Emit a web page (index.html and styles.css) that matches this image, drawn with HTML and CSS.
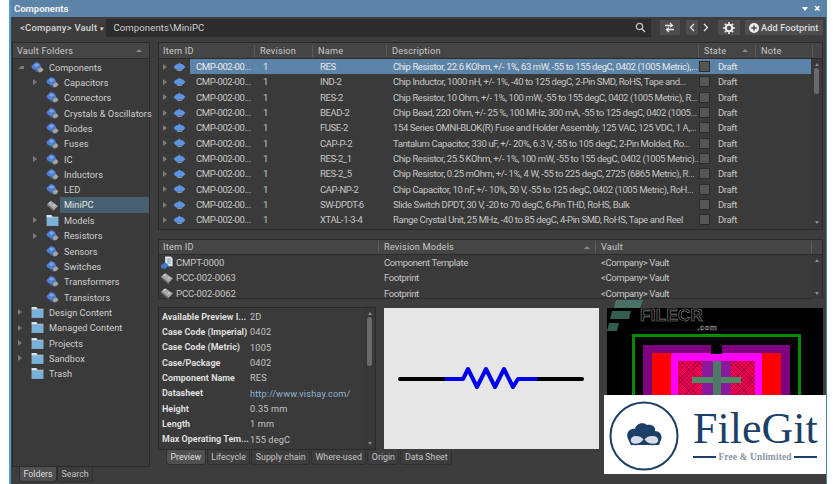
FILE: index.html
```html
<!DOCTYPE html>
<html lang="en">
<head>
<meta charset="utf-8">
<title>Components</title>
<link rel="stylesheet" href="styles.css">
</head>
<body>
<svg class="defs" width="0" height="0" aria-hidden="true">
  <symbol id="i-comp" viewBox="0 0 13 13">
    <path d="M0.500 5 3 2.500 5 1 8 2 9.500 4 10 6 6 9 3 8.500 1 7Z" fill="#4f80d2"/>
    <path d="M3 4 5.500 2.500 8 4 5.500 6Z" fill="#7ea8ea"/>
    <path d="M6 9 10 6 12.500 8.500 10.500 11 8 11.500Z" fill="#a4a4a4"/>
    <path d="M3 8.500 6 9 8 11.500 5 10.500Z" fill="#38639f"/>
  </symbol>
  <symbol id="i-row" viewBox="0 0 13 10">
    <path d="M0.500 5 3 2.500 5 2 6.500 0.500 8 2 10 2.500 12.500 5 10 7.500 3 7.500Z" fill="#5d93e0"/>
    <path d="M3.500 7.500H9.500L8.500 9H4.500Z" fill="#8198b8"/>
  </symbol>
  <symbol id="i-chip" viewBox="0 0 13 13">
    <path d="M1 5 5 2 12 7 8 11Z" fill="#a8a8a8"/>
    <path d="M1 5 8 11 8 12.500 1 6.500Z" fill="#707070"/>
    <path d="M3 3.500 4.500 2.500 5.500 3.200 4 4.300ZM7 6.500 8.500 5.500 9.500 6.200 8 7.300Z" fill="#dedede"/>
  </symbol>
  <symbol id="i-folder" viewBox="0 0 12 11">
    <path d="M0.500 0.500H5L6 2H11.500V3H0.500Z" fill="#d6e6f2"/>
    <path d="M0.500 3H11.500V10.500H0.500Z" fill="#79b2d9"/>
  </symbol>
  <symbol id="i-doc" viewBox="0 0 14 15">
    <path d="M5 0.500H11L13 2.500V11H5Z" fill="#dce3ea"/>
    <path d="M7 3.500H11M7 5.500H11M7 7.500H11" stroke="#7d93ad" fill="none"/>
    <path d="M0.500 10 5 7 9 10 5 14 1 13Z" fill="#3f78cc"/>
  </symbol>
</svg>

<div class="window">
  <header class="titlebar">
    <span class="title">Components</span>
    <span class="title-tools"><span class="menu-arrow"></span><span class="close">×</span></span>
  </header>

  <div class="toolbar">
    <span class="vault-label">&lt;Company&gt; Vault <span class="caret">▾</span></span>
    <div class="path">
      <span>Components\MiniPC</span>
      <svg class="search" width="11" height="11" viewBox="0 0 11 11"><circle cx="4.500" cy="4.500" r="3.200" fill="none" stroke="#bdbdbd" stroke-width="1.300"/><path d="M7 7 10 10" stroke="#bdbdbd" stroke-width="1.600"/></svg>
    </div>
    <button class="tool tool-refresh"><svg width="11" height="11" viewBox="0 0 11 11"><path d="M1 3.500H8M6 1 8.500 3.500 6 5M10 7.500H3M5 5.500 2.500 7.500 5 10" fill="none" stroke="#e6e6e6" stroke-width="1.300"/></svg></button>
    <div class="nav">
      <button class="tool tool-nav"><svg width="6" height="9" viewBox="0 0 6 9"><path d="M5 1 1.500 4.500 5 8" fill="none" stroke="#e6e6e6" stroke-width="1.300"/></svg></button>
      <button class="tool tool-nav tool-plain"><svg width="6" height="9" viewBox="0 0 6 9"><path d="M1 1 4.500 4.500 1 8" fill="none" stroke="#e6e6e6" stroke-width="1.300"/></svg></button>
    </div>
    <button class="tool tool-gear"><svg width="12" height="12" viewBox="0 0 12 12"><circle cx="6" cy="6" r="3.200" fill="none" stroke="#eee" stroke-width="2"/><path d="M6 0V2.500M6 9.500V12M0 6H2.500M9.500 6H12M1.800 1.800 3.500 3.500M8.500 8.500 10.200 10.200M1.800 10.200 3.500 8.500M8.500 3.500 10.200 1.800" stroke="#eee" stroke-width="1.500"/></svg></button>
    <button class="tool tool-add"><svg width="10" height="10" viewBox="0 0 10 10"><circle cx="5" cy="5" r="5" fill="#eee"/><path d="M5 2.200V7.800M2.200 5H7.800" stroke="#4a4a4a" stroke-width="1.500"/></svg>Add Footprint</button>
  </div>

  <div class="main">
    <aside class="left">
      <div class="panel tree-panel">
        <div class="head tree-head"><span>Vault Folders</span><span class="sort-up"></span></div>
        <ul class="tree">
          <li class="node l0"><i class="tw tw-open"></i><svg class="ic"><use href="#i-comp"/></svg><span>Components</span></li>
          <li class="node l1"><i class="tw"></i><svg class="ic"><use href="#i-comp"/></svg><span>Capacitors</span></li>
          <li class="node l1"><i class="tw none"></i><svg class="ic"><use href="#i-comp"/></svg><span>Connectors</span></li>
          <li class="node l1"><i class="tw none"></i><svg class="ic"><use href="#i-comp"/></svg><span>Crystals &amp; Oscillators</span></li>
          <li class="node l1"><i class="tw none"></i><svg class="ic"><use href="#i-comp"/></svg><span>Diodes</span></li>
          <li class="node l1"><i class="tw none"></i><svg class="ic"><use href="#i-comp"/></svg><span>Fuses</span></li>
          <li class="node l1"><i class="tw"></i><svg class="ic"><use href="#i-comp"/></svg><span>IC</span></li>
          <li class="node l1"><i class="tw none"></i><svg class="ic"><use href="#i-comp"/></svg><span>Inductors</span></li>
          <li class="node l1"><i class="tw none"></i><svg class="ic"><use href="#i-comp"/></svg><span>LED</span></li>
          <li class="node l1"><i class="tw none"></i><svg class="ic"><use href="#i-chip"/></svg><span class="sel-name">MiniPC</span></li>
          <li class="node l1"><i class="tw"></i><svg class="ic"><use href="#i-folder"/></svg><span>Models</span></li>
          <li class="node l1"><i class="tw"></i><svg class="ic"><use href="#i-comp"/></svg><span>Resistors</span></li>
          <li class="node l1"><i class="tw none"></i><svg class="ic"><use href="#i-comp"/></svg><span>Sensors</span></li>
          <li class="node l1"><i class="tw none"></i><svg class="ic"><use href="#i-comp"/></svg><span>Switches</span></li>
          <li class="node l1"><i class="tw none"></i><svg class="ic"><use href="#i-comp"/></svg><span>Transformers</span></li>
          <li class="node l1"><i class="tw none"></i><svg class="ic"><use href="#i-comp"/></svg><span>Transistors</span></li>
          <li class="node l0"><i class="tw"></i><svg class="ic"><use href="#i-folder"/></svg><span>Design Content</span></li>
          <li class="node l0"><i class="tw"></i><svg class="ic"><use href="#i-folder"/></svg><span>Managed Content</span></li>
          <li class="node l0"><i class="tw"></i><svg class="ic"><use href="#i-folder"/></svg><span>Projects</span></li>
          <li class="node l0"><i class="tw"></i><svg class="ic"><use href="#i-folder"/></svg><span>Sandbox</span></li>
          <li class="node l0"><i class="tw none"></i><svg class="ic"><use href="#i-folder"/></svg><span>Trash</span></li>
        </ul>
      </div>
      <div class="tabs left-tabs"><span class="tab on">Folders</span><span class="tab">Search</span></div>
    </aside>

    <section class="right">
      <div class="panel items">
        <div class="head items-grid">
          <span class="hc">Item ID</span><span class="hc sep">Revision</span><span class="hc sep">Name</span><span class="hc sep">Description</span><span class="hc sep state-h">State<span class="sort-up"></span></span><span class="hc sep">Note</span><span class="hc sep"></span>
        </div>
        <div class="items-body">
          <div class="rows">
            <div class="row items-grid selected"><span class="idc"><i class="tw"></i><svg class="ir"><use href="#i-row"/></svg><span class="idt">CMP-002-00...</span></span><span class="rev">1</span><span class="nm">RES</span><span class="desc">Chip Resistor, 22.6 KOhm, +/- 1%, 63 mW, -55 to 155 degC, 0402 (1005 Metric),...</span><span class="st"><i class="box"></i>Draft</span></div>
            <div class="row items-grid"><span class="idc"><i class="tw"></i><svg class="ir"><use href="#i-row"/></svg><span class="idt">CMP-002-00...</span></span><span class="rev">1</span><span class="nm">IND-2</span><span class="desc">Chip Inductor, 1000 nH, +/- 1%, -40 to 125 degC, 2-Pin SMD, RoHS, Tape and...</span><span class="st"><i class="box"></i>Draft</span></div>
            <div class="row items-grid"><span class="idc"><i class="tw"></i><svg class="ir"><use href="#i-row"/></svg><span class="idt">CMP-002-00...</span></span><span class="rev">1</span><span class="nm">RES-2</span><span class="desc">Chip Resistor, 10 Ohm, +/- 1%, 100 mW, -55 to 155 degC, 0402 (1005 Metric), R...</span><span class="st"><i class="box"></i>Draft</span></div>
            <div class="row items-grid"><span class="idc"><i class="tw"></i><svg class="ir"><use href="#i-row"/></svg><span class="idt">CMP-002-00...</span></span><span class="rev">1</span><span class="nm">BEAD-2</span><span class="desc">Chip Bead, 220 Ohm, +/- 25 %, 100 MHz, 300 mA, -55 to 125 degC, 0402 (1005...</span><span class="st"><i class="box"></i>Draft</span></div>
            <div class="row items-grid"><span class="idc"><i class="tw"></i><svg class="ir"><use href="#i-row"/></svg><span class="idt">CMP-002-00...</span></span><span class="rev">1</span><span class="nm">FUSE-2</span><span class="desc">154 Series OMNI-BLOK(R) Fuse and Holder Assembly, 125 VAC, 125 VDC, 1 A,...</span><span class="st"><i class="box"></i>Draft</span></div>
            <div class="row items-grid"><span class="idc"><i class="tw"></i><svg class="ir"><use href="#i-row"/></svg><span class="idt">CMP-002-00...</span></span><span class="rev">1</span><span class="nm">CAP-P-2</span><span class="desc">Tantalum Capacitor, 330 uF, +/- 20%, 6.3 V, -55 to 105 degC, 2-Pin Molded, Ro...</span><span class="st"><i class="box"></i>Draft</span></div>
            <div class="row items-grid"><span class="idc"><i class="tw"></i><svg class="ir"><use href="#i-row"/></svg><span class="idt">CMP-002-00...</span></span><span class="rev">1</span><span class="nm">RES-2_1</span><span class="desc">Chip Resistor, 25.5 KOhm, +/- 1%, 100 mW, -55 to 155 degC, 0402 (1005 Metric)...</span><span class="st"><i class="box"></i>Draft</span></div>
            <div class="row items-grid"><span class="idc"><i class="tw"></i><svg class="ir"><use href="#i-row"/></svg><span class="idt">CMP-002-00...</span></span><span class="rev">1</span><span class="nm">RES-2_5</span><span class="desc">Chip Resistor, 0.25 mOhm, +/- 1%, 4 W, -55 to 225 degC, 2725 (6865 Metric), R...</span><span class="st"><i class="box"></i>Draft</span></div>
            <div class="row items-grid"><span class="idc"><i class="tw"></i><svg class="ir"><use href="#i-row"/></svg><span class="idt">CMP-002-00...</span></span><span class="rev">1</span><span class="nm">CAP-NP-2</span><span class="desc">Chip Capacitor, 10 nF, +/- 10%, 50 V, -55 to 125 degC, 0402 (1005 Metric), RoH...</span><span class="st"><i class="box"></i>Draft</span></div>
            <div class="row items-grid"><span class="idc"><i class="tw"></i><svg class="ir"><use href="#i-row"/></svg><span class="idt">CMP-002-00...</span></span><span class="rev">1</span><span class="nm">SW-DPDT-6</span><span class="desc">Slide Switch DPDT, 30 V, -20 to 70 degC, 6-Pin THD, RoHS, Bulk</span><span class="st"><i class="box"></i>Draft</span></div>
            <div class="row items-grid"><span class="idc"><i class="tw"></i><svg class="ir"><use href="#i-row"/></svg><span class="idt">CMP-002-00...</span></span><span class="rev">1</span><span class="nm">XTAL-1-3-4</span><span class="desc">Range Crystal Unit, 25 MHz, -40 to 85 degC, 4-Pin SMD, RoHS, Tape and Reel</span><span class="st"><i class="box"></i>Draft</span></div>
          </div>
          <div class="scroll"><i class="sa up"></i><i class="thumb t-items"></i><i class="sa down"></i></div>
        </div>
      </div>

      <div class="panel models">
        <div class="head models-grid">
          <span class="hc">Item ID</span><span class="hc sep rm-h">Revision Models<span class="sort-up"></span></span><span class="hc sep">Vault</span><span class="hc sep"></span>
        </div>
        <div class="items-body">
          <div class="rows">
            <div class="row models-grid"><span class="mid"><svg class="im"><use href="#i-doc"/></svg>CMPT-0000</span><span class="ind">Component Template</span><span class="ind">&lt;Company&gt; Vault</span></div>
            <div class="row models-grid"><span class="mid"><svg class="im"><use href="#i-chip"/></svg>PCC-002-0063</span><span class="ind">Footprint</span><span class="ind">&lt;Company&gt; Vault</span></div>
            <div class="row models-grid"><span class="mid"><svg class="im"><use href="#i-chip"/></svg>PCC-002-0062</span><span class="ind">Footprint</span><span class="ind">&lt;Company&gt; Vault</span></div>
          </div>
          <div class="scroll"><i class="sa up"></i><i class="sa down"></i></div>
        </div>
      </div>

      <div class="details">
        <div class="panel props">
          <dl class="plist">
            <div class="prop"><dt>Available Preview I...</dt><dd>2D</dd></div>
            <div class="prop"><dt>Case Code (Imperial)</dt><dd>0402</dd></div>
            <div class="prop"><dt>Case Code (Metric)</dt><dd>1005</dd></div>
            <div class="prop"><dt>Case/Package</dt><dd>0402</dd></div>
            <div class="prop"><dt>Component Name</dt><dd>RES</dd></div>
            <div class="prop"><dt>Datasheet</dt><dd class="link">http://www.vishay.com/</dd></div>
            <div class="prop"><dt>Height</dt><dd>0.35 mm</dd></div>
            <div class="prop"><dt>Length</dt><dd>1 mm</dd></div>
            <div class="prop"><dt>Max Operating Tem...</dt><dd>155 degC</dd></div>
          </dl>
          <div class="scroll"><i class="sa up"></i><i class="thumb t-props"></i><i class="sa down"></i></div>
        </div>
        <div class="preview">
          <svg width="215" height="141" viewBox="0 0 215 141">
            <path d="M16 71H61M153 71H198" stroke="#000" stroke-width="4" stroke-linecap="round" fill="none"/>
            <path d="M61 71H79L84 61 93 79 102 61 111 79 120 61 129 79 134 71H153" stroke="#0000f0" stroke-width="4" stroke-linejoin="round" fill="none"/>
          </svg>
        </div>
        <div class="footprint">
          <div class="fp-green"><div class="fp-purple"><div class="fp-notch"></div><div class="fp-red"><div class="fp-mag"><div class="fp-hatch"><div class="fp-mid"></div><div class="fp-h"></div><div class="fp-v"></div></div></div></div></div></div>
        </div>
      </div>
      <div class="tabs detail-tabs"><span class="tab on">Preview</span><span class="tab">Lifecycle</span><span class="tab">Supply chain</span><span class="tab">Where-used</span><span class="tab">Origin</span><span class="tab">Data Sheet</span></div>
    </section>
  </div>
</div>

<div class="filecr">
  <svg width="36" height="36" viewBox="0 0 36 36"><path d="M9 0H36L33 8H7ZM5 11H24L22 19H3ZM2 23H12L10 31H0Z" fill="#4f8f7e" opacity=".65"/></svg>
  <span class="fc-name">FILECR<small>.com</small></span>
</div>

<div class="filegit">
  <svg class="fg-logo" width="70" height="70" viewBox="0 0 70 70">
    <circle cx="35" cy="35" r="33.500" fill="none" stroke="#1c3f68" stroke-width="2"/>
    <path d="M19 38C16 31 22 27 26 28 27 22 35 21 38 24 43 23 47 26 46 30 51 30 54 35 52 39L50 44 22 44Z" fill="#1c3f68"/>
    <path d="M35 38C31 33 22 33 21 39 21 45 31 45 35 39 39 45 50 45 50 39 49 33 39 33 35 38Z" fill="#d6dde6" stroke="#1c3f68" stroke-width="1.500"/>
  </svg>
  <div class="fg-text">
    <span class="fg-name">FileGit</span>
    <span class="fg-sub"><i></i><b>Free &amp; Unlimited</b><i></i></span>
  </div>
</div>
</body>
</html>
```

FILE: styles.css
```css
* { box-sizing: border-box; }
html, body { margin: 0; padding: 0; height: 484px; overflow: hidden; background: #fff; }
body { position: relative; font-family: Roboto, "Open Sans", sans-serif; font-size: 9.2px; color: #cfcfcf; }
.defs { position: absolute; }
ul, dl, dd { margin: 0; padding: 0; list-style: none; }
button { font: inherit; color: inherit; border: 0; padding: 0; }

.window { margin-left: 9px; width: 818px; height: 484px; background: #3d3d3d; border-left: 2px solid #4f9ed2; border-right: 1px solid #4f86ad; display: flex; flex-direction: column; overflow: hidden; }

.titlebar { height: 17px; flex: none; background: #5c84a9; display: flex; align-items: center; justify-content: space-between; padding: 0 6px 0 3px; }
.title { font-weight: 700; font-size: 9.5px; color: #f0f0f0; }
.title-tools { display: flex; align-items: center; gap: 6px; }
.menu-arrow { width: 0; height: 0; border: 3px solid transparent; border-top: 4px solid #fff; border-bottom: 0; }
.close { color: #fff; font-size: 11px; font-weight: 700; line-height: 10px; }

.toolbar { height: 25px; flex: none; display: flex; align-items: center; padding: 0 3px 4px 9px; }
.vault-label { width: 87px; font-size: 9.5px; letter-spacing: .2px; color: #d8d8d8; font-weight: 500; white-space: nowrap; }
.caret { font-size: 7px; }
.path { width: 548px; height: 18px; background: #2c2c2c; display: flex; align-items: center; justify-content: space-between; padding: 0 5px 0 7px; color: #d0d0d0; font-size: 9.5px; letter-spacing: .15px; }
.tool { height: 15px; background: #4e4e4e; display: flex; align-items: center; justify-content: center; }
.tool-refresh { width: 20px; margin-left: 9px; }
.nav { display: flex; margin-left: 6px; gap: 2px; }
.tool-nav { width: 12px; }
.tool-plain { background: transparent; }
.tool-gear { width: 22px; margin-left: 6px; }
.tool-add { width: 79px; margin-left: 5px; gap: 2px; font-size: 9.2px; font-weight: 500; letter-spacing: .1px; color: #dedede; }

.main { flex: 1; min-height: 0; display: flex; padding-left: 1px; padding-right: 3px; gap: 8px; }
.left { width: 138px; flex: none; display: flex; flex-direction: column; }
.right { flex: 1; min-width: 0; display: flex; flex-direction: column; }

.panel { background: #3a3a3a; border: 1px solid #2b2b2b; }
.head { height: 16px; background: #454545; border-bottom: 1px solid #2b2b2b; letter-spacing: .2px; color: #c9c9c9; }
.tree-head { display: flex; align-items: center; justify-content: space-between; padding: 0 7px 0 4px; }
.sort-up { width: 0; height: 0; border: 3px solid transparent; border-bottom: 3px solid #8a8a8a; border-top: 0; }

.tree-panel { height: 425px; }
.node { height: 15.33px; display: flex; align-items: center; letter-spacing: .03px; white-space: nowrap; }
.tree { padding-top: .5px; }
.l0 { padding-left: 5px; }
.l1 { padding-left: 20px; }
.tw { flex: none; display: block; width: 13px; }
.tw::before { content: ""; display: block; width: 0; height: 0; border: 3px solid transparent; border-left: 4px solid #7c7c7c; border-right: 0; }
.tw.none::before { border-left-color: transparent; }
.tw-open::before { border: 3px solid transparent; border-bottom: 3px solid #7c7c7c; border-right: 3px solid #7c7c7c; border-top: 0; border-left: 3px solid transparent; }
.ic { width: 13px; height: 13px; flex: none; margin-right: 5px; }
.sel-name { background: #47606f; color: #e6e6e6; width: 90px; margin-left: -4px; padding-left: 4px; height: 16px; line-height: 16px; }

.tabs { display: flex; }
.left-tabs { padding-left: 7px; }
.tab { height: 15px; line-height: 14px; padding: 0 3.500px; background: #3d3d3d; border: 1px solid #2f2f2f; border-top: 0; border-radius: 0 0 3px 3px; font-size: 8.800px; color: #c4c4c4; }
.tab.on { background: #505050; color: #dedede; }

.items { height: 188px; flex: none; }
.items-grid { display: grid; grid-template-columns: 95px 58px 74px 312px 57px 57px 1fr; align-items: center; }
.head.items-grid { height: 16px; }
.hc { padding-left: 4px; height: 12px; line-height: 12px; }
.sep { border-left: 1px solid #5b5b5b; padding-left: 5px; }
.state-h { display: flex; align-items: center; justify-content: space-between; padding-right: 7px; }
.rm-h { display: flex; align-items: center; justify-content: space-between; padding-right: 5px; }
.items-body { display: flex; min-height: 0; }
.rows { flex: 1; min-width: 0; }
.row { height: 15.33px; font-family: Roboto, "Liberation Sans", sans-serif; font-size: 9.5px; letter-spacing: -.4px; color: #c6c6c6; white-space: nowrap; }
.row > span { overflow: hidden; padding-left: 6px; line-height: 15.33px; }
.row > .idc { padding-left: 4px; display: flex; align-items: center; overflow: visible; position: relative; }
.idc .tw { width: 10px; }
.ir { width: 13px; height: 10px; flex: none; }
.idt { margin-left: 10px; color: #c9c9c9; }
.row > .rev { padding-left: 9px; }
.row > .nm { padding-left: 8px; }
.row > .desc { padding-left: 7px; overflow: visible; }
.selected { background: linear-gradient(90deg, transparent 31px, #5c84a9 31px); color: #e8e8e8; height: 15.33px; }
.selected .idt { color: #eee; }
.row > .st { display: flex; align-items: center; padding-left: 1px; gap: 8px; overflow: visible; }
.box { width: 11px; height: 11px; background: #565656; border: 1px solid #2b2b2b; flex: none; }

.scroll { width: 11px; flex: none; background: #383838; display: flex; flex-direction: column; align-items: center; position: relative; }
.sa { width: 0; height: 0; border: 2.500px solid transparent; }
.sa.up { border-bottom: 3px solid #8a8a8a; border-top: 0; margin-top: 4px; }
.sa.down { border-top: 3px solid #8a8a8a; border-bottom: 0; margin-top: auto; margin-bottom: 4px; }
.thumb { width: 5px; background: #6a6a6a; border-radius: 3px; }
.t-items { height: 26px; margin-top: 2px; }
.t-props { height: 49px; margin-top: 2px; }

.models { height: 60px; flex: none; margin-top: 9px; }
.models-grid { display: grid; grid-template-columns: 219px 217px 216px 1fr; align-items: center; }
.models .head { height: 15px; }
.models .row > span { padding-left: 6px; }
.models .row > .ind { padding-left: 6px; }
.models .row > .mid { padding-left: 1px; display: flex; align-items: center; gap: 2px; overflow: visible; letter-spacing: -.1px; }
.im { width: 14px; height: 14px; flex: none; }
.models .items-body { height: 44px; overflow: hidden; }

.details { display: flex; height: 143px; flex: none; margin-top: 8px; }
.props { width: 218px; flex: none; display: flex; }
.plist { flex: 1; padding-top: 1px; }
.prop { display: flex; height: 15.33px; align-items: center; white-space: nowrap; }
.prop dt { width: 91px; padding-left: 3px; flex: none; font-size: 9px; font-weight: 700; color: #dedede; overflow: hidden; }
.prop dd { color: #c4c4c4; letter-spacing: .15px; }
.prop .link { color: #8fb2d2; }
.preview { width: 215px; margin: 1px 0 1px 8px; flex: none; background: #e6e6e6; border: 0; }
.preview svg { display: block; }
.footprint { width: 216px; margin: 1px 0 0 8px; flex: none; background: #000; padding: 26px 22px 0 25px; overflow: hidden; }
.fp-green { border: 3px solid #008a00; border-bottom: 0; height: 130px; padding: 8px 8px 0; }
.fp-purple { background: #7d007d; height: 120px; padding: 9px 9px 0; position: relative; }
.fp-notch { position: absolute; top: 0; left: 68px; width: 11px; height: 9px; background: #000; }
.fp-red { background: #ff0000; height: 110px; padding: 0 19px; }
.fp-mag { background: #ff00ff; height: 110px; padding: 8px 7px 0; margin-top: -1px; border-radius: 3px 3px 0 0; }
.fp-hatch { height: 100px; position: relative; background-color: #ff0050; background-image: repeating-linear-gradient(45deg, rgba(120,0,60,.5) 0 1px, transparent 1px 3px), repeating-linear-gradient(-45deg, rgba(120,0,60,.5) 0 1px, transparent 1px 3px); }
.fp-mid { position: absolute; left: 24px; top: 0; width: 29px; height: 100px; background: #8a1a9a; }
.fp-h { position: absolute; left: 14px; top: 16px; width: 49px; height: 6px; background: #4d8a66; }
.fp-v { position: absolute; left: 35px; top: 0; width: 8px; height: 100px; background: #4d7a66; }

.detail-tabs { padding-left: 8px; margin-top: 0; gap: 1px; }
.left-tabs { gap: 0; }

.filecr { position: absolute; left: 607px; top: 300px; display: flex; gap: 0; pointer-events: none; }
.fc-name { font-family: "Liberation Sans", sans-serif; font-weight: 700; font-size: 17px; line-height: 17px; color: transparent; -webkit-text-stroke: .6px #8a8a8a; margin-left: -3px; margin-top: 7px; position: relative; letter-spacing: .3px; }
.fc-name small { position: absolute; right: -14px; top: 17px; font-size: 8px; line-height: 8px; -webkit-text-stroke: .4px #aaa; }

.filegit { position: absolute; left: 604px; top: 395px; width: 222px; height: 79px; background: #fff; display: flex; align-items: center; padding-left: 5px; }
.fg-logo { flex: none; margin-top: 2px; }
.fg-text { margin-left: 14px; width: 124px; display: flex; flex-direction: column; }
.fg-name { font-family: "Liberation Serif", serif; font-size: 44px; line-height: 44px; color: #1c3f68; white-space: nowrap; }
.fg-sub { display: flex; align-items: center; justify-content: space-between; height: 12px; margin-top: 0; }
.fg-sub i { width: 23px; height: 2px; background: #1c3f68; }
.fg-sub b { font-family: "Liberation Serif", serif; font-weight: 700; font-size: 9.500px; letter-spacing: .1px; color: #8a96a3; white-space: nowrap; }
```
